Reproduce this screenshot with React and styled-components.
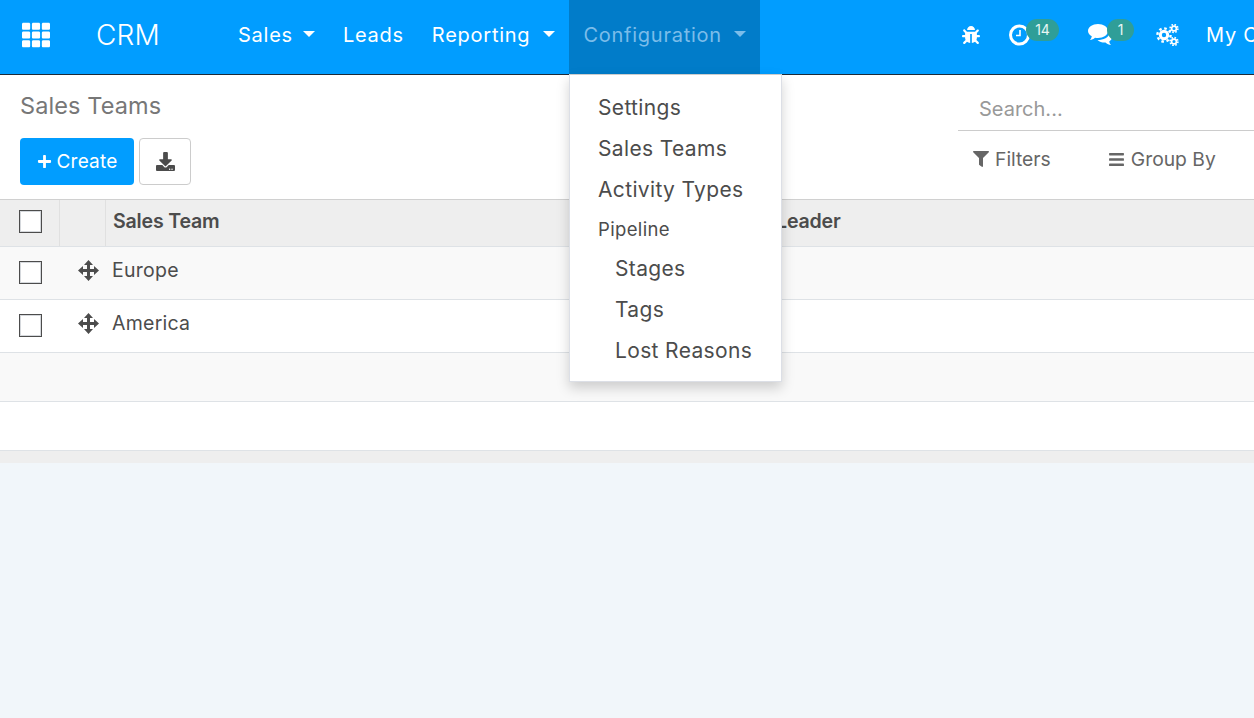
import React from "react";
import styled, { createGlobalStyle } from "styled-components";
import { FaTh, FaBug, FaFilter, FaBars, FaPlus, FaDownload } from "react-icons/fa";

const Global = createGlobalStyle`
  html, body { margin: 0; padding: 0; height: 100%; overflow: hidden; background: #f1f6fa; }
  body { font-family: Inter, "Open Sans", sans-serif; color: #4c4c4c; }
  #root { height: 718px; overflow: hidden; }
`;

const Page = styled.div`
  display: flex;
  flex-direction: column;
  width: 1254px;
  height: 718px;
  position: relative;
  overflow: hidden;
`;

const Navbar = styled.header`
  display: flex;
  align-items: stretch;
  height: 74px;
  flex: none;
  background: #019dff;
  border-bottom: 1px solid #1d2a38;
  color: #fff;
  white-space: nowrap;
`;

const AppsButton = styled.div`
  display: flex;
  align-items: center;
  width: 96px;
  padding: 0 0 4px 22px;
  box-sizing: border-box;
  font-size: 28px;
  flex: none;
`;

const Brand = styled.div`
  display: flex;
  align-items: center;
  width: 128px;
  padding-bottom: 4px;
  box-sizing: border-box;
  flex: none;
  font-size: 28px;
  font-weight: 300;
  letter-spacing: 0.2px;
`;

const Menu = styled.nav`
  display: flex;
  align-items: stretch;
  flex: none;
`;

const MenuItem = styled.div`
  display: flex;
  align-items: center;
  padding: 0 14px 4px;
  font-size: 20px;
  letter-spacing: 0.75px;
  font-weight: 400;
  background: ${(p) => (p.$open ? "#017cc9" : "transparent")};
  color: ${(p) => (p.$open ? "#7bbdea" : "#fff")};
`;

const Caret = styled.span`
  display: inline-block;
  margin-left: ${(p) => p.$gap}px;
  margin-top: -2px;
  width: 0;
  height: 0;
  border-left: 6.5px solid transparent;
  border-right: 6.5px solid transparent;
  border-top: 6.5px solid currentColor;
`;

const Systray = styled.div`
  margin-left: auto;
  display: flex;
  align-items: center;
  width: 294px;
  padding-bottom: 4px;
  box-sizing: border-box;
  flex: none;
  overflow: hidden;
  font-size: 20px;
`;

const TrayIcon = styled.span`
  position: relative;
  display: inline-flex;
  align-items: center;
  justify-content: flex-start;
  width: ${(p) => p.$w}px;
  height: 22px;
  padding-left: ${(p) => p.$pad || 0}px;
  box-sizing: border-box;
  flex: none;
  font-size: ${(p) => p.$size || 21}px;
`;

const Badge = styled.span`
  position: absolute;
  left: ${(p) => p.$left}px;
  top: -5px;
  width: ${(p) => p.$w}px;
  height: 22px;
  border-radius: 11px;
  background: #2f9e98;
  color: #e8f6f4;
  font-size: 14px;
  line-height: 21px;
  text-align: center;
`;

const UserName = styled.span`
  font-size: 20px;
  letter-spacing: 0.75px;
`;

const Dropdown = styled.div`
  position: absolute;
  left: 569px;
  top: 74px;
  width: 213px;
  height: 308px;
  box-sizing: border-box;
  background: #fff;
  border: 1px solid #dcdfe6;
  border-top-color: #ccc;
  box-shadow: 0 6px 12px rgba(0, 0, 0, 0.175);
  padding-top: 12px;
  z-index: 5;
  color: #4c4c4c;
  letter-spacing: 0.35px;
`;

const DropItem = styled.div`
  height: 41px;
  line-height: 41px;
  font-size: 21px;
  padding-left: ${(p) => (p.$nested ? 45 : 28)}px;
`;

const DropHeader = styled.div`
  height: 38px;
  line-height: 39px;
  font-size: 18.5px;
  padding-left: 28px;
`;

const ControlPanel = styled.section`
  display: grid;
  grid-template-columns: 958px 296px;
  height: 124px;
  flex: none;
  background: #fff;
  box-sizing: border-box;
`;

const CpLeft = styled.div`
  display: flex;
  flex-direction: column;
  padding: 16px 0 0 20px;
`;

const Breadcrumb = styled.div`
  font-size: 23.5px;
  line-height: 30px;
  color: #777;
  letter-spacing: 0.1px;
`;

const Buttons = styled.div`
  display: flex;
  gap: 5px;
  margin-top: 17px;
`;

const CreateButton = styled.div`
  display: flex;
  align-items: center;
  justify-content: center;
  gap: 5px;
  width: 114px;
  height: 47px;
  border-radius: 4px;
  background: #019dff;
  color: #fff;
  font-size: 19px;
  letter-spacing: 0.2px;
`;

const IconButton = styled.div`
  display: flex;
  align-items: center;
  justify-content: center;
  width: 52px;
  height: 47px;
  box-sizing: border-box;
  border: 1px solid #ccc;
  border-radius: 4px;
  background: #fff;
  color: #4c4c4c;
  font-size: 19px;
`;

const CpRight = styled.div`
  display: flex;
  flex-direction: column;
`;

const Search = styled.div`
  height: 56px;
  box-sizing: border-box;
  padding: 20px 0 0 21px;
  border-bottom: 1px solid #ccc;
  font-size: 20px;
  line-height: 28px;
  color: #999;
`;

const Filters = styled.div`
  display: flex;
  padding-top: 16px;
`;

const FilterItem = styled.div`
  display: flex;
  align-items: center;
  gap: 6px;
  margin-left: ${(p) => p.$left}px;
  font-size: 19.3px;
  line-height: 24px;
  color: #666;
`;

const Grid = styled.div`
  flex: none;
  display: flex;
  flex-direction: column;
`;

const HeadRow = styled.div`
  display: grid;
  grid-template-columns: 60px 46px 1fr 534px;
  height: 48px;
  box-sizing: border-box;
  background: #eee;
  border-top: 1px solid #d0d0d0;
  border-bottom: 1px solid #dee2e6;
`;

const HeadCell = styled.div`
  display: flex;
  align-items: center;
  box-sizing: border-box;
  padding-left: ${(p) => p.$pad || 0}px;
  padding-bottom: 4px;
  border-right: ${(p) => (p.$sep ? "1px solid #e0e0e0" : "none")};
  font-weight: 600;
  font-size: 19.6px;
  color: #4c4c4c;
  letter-spacing: -0.2px;
`;

const Check = styled.span`
  display: block;
  width: 23px;
  height: 23px;
  box-sizing: border-box;
  border: 1px solid #4c4c4c;
  box-shadow: inset 0 0 0 1px #d5d8dc;
  background: #fff;
  margin-left: 19px;
  margin-top: ${(p) => p.$top || 0}px;
  flex: none;
`;

const Row = styled.div`
  display: flex;
  align-items: center;
  height: ${(p) => p.$h || 53}px;
  box-sizing: border-box;
  border-bottom: 1px solid #dee2e6;
  background: ${(p) => (p.$odd ? "#f9f9f9" : "#fff")};
  font-size: 19.5px;
  letter-spacing: 0.25px;
  color: #4c4c4c;
`;

const Handle = styled.svg`
  display: block;
  flex: none;
  width: 21px;
  height: 21px;
  margin-left: 36px;
  margin-top: -6px;
  fill: #4c4c4c;
`;

const RowName = styled.span`
  margin-left: 13px;
  margin-top: -6px;
`;

const Footer = styled.div`
  height: 12px;
  background: #eee;
  flex: none;
`;

const MoveIcon = () => (
  <Handle viewBox="0 0 21 21">
    <path d="M10.5 0 L15 5 L12 5 L12 9 L16 9 L16 6 L21 10.5 L16 15 L16 12 L12 12 L12 16 L15 16 L10.5 21 L6 16 L9 16 L9 12 L5 12 L5 15 L0 10.5 L5 6 L5 9 L9 9 L9 5 L6 5 Z" />
  </Handle>
);

const ClockIcon = () => (
  <svg width="22" height="22" viewBox="0 0 22 22" fill="none" stroke="#fff">
    <circle cx="10.5" cy="11" r="9" strokeWidth="3" />
    <path d="M11 6 V11.5 H7" strokeWidth="1.6" />
  </svg>
);

const CommentsIcon = () => (
  <svg width="24" height="22" viewBox="0 0 24 22" fill="#fff">
    <path d="M10 0 C15.5 0 20 3 20 7 C20 11 15.5 14 10 14 C9 14 8 13.9 7 13.7 C5.5 15 3.8 15.8 2 16 C3 14.8 3.6 13.7 3.8 12.3 C1.5 11 0 9.1 0 7 C0 3 4.5 0 10 0 Z" />
    <path d="M21.5 9 C23 10.2 24 11.6 24 13.2 C24 14.8 23 16.3 21.2 17.4 C21.4 18.8 22 20 23 21 C21 20.8 19 19.8 17.5 18.5 C15.5 18.8 12 18.5 9.5 16 C15.5 16 21 13.5 21.5 9 Z" />
  </svg>
);

const CogsIcon = () => (
  <svg width="23" height="22" viewBox="0 0 23 22" fill="none" stroke="#fff">
    <circle cx="8" cy="11" r="3.7" strokeWidth="3" />
    <circle cx="8" cy="11" r="6.6" strokeWidth="2.4" strokeDasharray="2.6 2.58" />
    <circle cx="18" cy="4.5" r="2.4" strokeWidth="1.7" />
    <circle cx="18" cy="4.5" r="3.9" strokeWidth="1.6" strokeDasharray="1.6 1.46" />
    <circle cx="18" cy="17.5" r="2.4" strokeWidth="1.7" />
    <circle cx="18" cy="17.5" r="3.9" strokeWidth="1.6" strokeDasharray="1.6 1.46" />
  </svg>
);

export default function App() {
  return (
    <Page>
      <Global />
      <Navbar>
        <AppsButton><FaTh /></AppsButton>
        <Brand>CRM</Brand>
        <Menu>
          <MenuItem>Sales<Caret $gap={10} /></MenuItem>
          <MenuItem>Leads</MenuItem>
          <MenuItem>Reporting<Caret $gap={13} /></MenuItem>
          <MenuItem $open>Configuration<Caret $gap={12} /></MenuItem>
        </Menu>
        <Systray>
          <TrayIcon $w={49} $size={18} $pad={2}><FaBug /></TrayIcon>
          <TrayIcon $w={79}><ClockIcon /><Badge $left={17} $w={33}>14</Badge></TrayIcon>
          <TrayIcon $w={68}><CommentsIcon /><Badge $left={19} $w={27}>1</Badge></TrayIcon>
          <TrayIcon $w={50}><CogsIcon /></TrayIcon>
          <UserName>My Company</UserName>
        </Systray>
      </Navbar>
      <Dropdown>
        <DropItem>Settings</DropItem>
        <DropItem>Sales Teams</DropItem>
        <DropItem>Activity Types</DropItem>
        <DropHeader>Pipeline</DropHeader>
        <DropItem $nested>Stages</DropItem>
        <DropItem $nested>Tags</DropItem>
        <DropItem $nested>Lost Reasons</DropItem>
      </Dropdown>
      <ControlPanel>
        <CpLeft>
          <Breadcrumb>Sales Teams</Breadcrumb>
          <Buttons>
            <CreateButton><FaPlus size={15} />Create</CreateButton>
            <IconButton><FaDownload /></IconButton>
          </Buttons>
        </CpLeft>
        <CpRight>
          <Search>Search...</Search>
          <Filters>
            <FilterItem $left={15}><FaFilter size={16} />Filters</FilterItem>
            <FilterItem $left={57}><FaBars size={17} />Group By</FilterItem>
          </Filters>
        </CpRight>
      </ControlPanel>
      <Grid>
        <HeadRow>
          <HeadCell $sep><Check /></HeadCell>
          <HeadCell $sep />
          <HeadCell $pad={7}>Sales Team</HeadCell>
          <HeadCell>Team Leader</HeadCell>
        </HeadRow>
        <Row $odd><Check $top={-1} /><MoveIcon /><RowName>Europe</RowName></Row>
        <Row><Check $top={-1} /><MoveIcon /><RowName>America</RowName></Row>
        <Row $odd $h={49} />
        <Row $h={49} />
        <Footer />
      </Grid>
    </Page>
  );
}
